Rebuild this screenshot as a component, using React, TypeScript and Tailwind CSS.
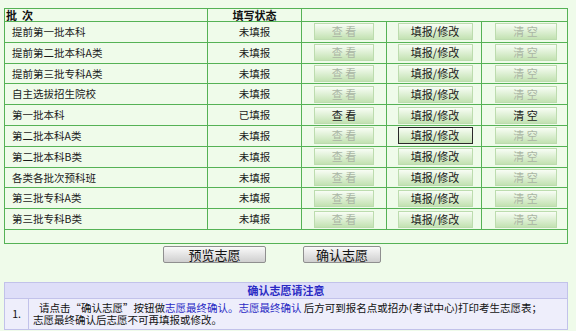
const rows = [
  { name: "提前第一批本科", status: "未填报", view: false, clear: false },
  { name: "提前第二批本科A类", status: "未填报", view: false, clear: false },
  { name: "提前第三批专科A类", status: "未填报", view: false, clear: false },
  { name: "自主选拔招生院校", status: "未填报", view: false, clear: false },
  { name: "第一批本科", status: "已填报", view: true, clear: true },
  { name: "第二批本科A类", status: "未填报", view: false, clear: false, focus: true },
  { name: "第二批本科B类", status: "未填报", view: false, clear: false },
  { name: "各类各批次预科班", status: "未填报", view: false, clear: false },
  { name: "第三批专科A类", status: "未填报", view: false, clear: false },
  { name: "第三批专科B类", status: "未填报", view: false, clear: false },
];

const GreenButton = ({
  label,
  enabled,
  focus,
  width,
}: {
  label: string;
  enabled: boolean;
  focus?: boolean;
  width: string;
}) => (
  <button
    className={`${width} h-[17px] flex items-center justify-center text-[11px] leading-none bg-gradient-to-b from-[#f8fdf5] to-[#c3e2b2] border ${
      focus ? "border-[#2a2a2a]" : "border-[#bcdcae]"
    } ${enabled ? "text-[#1a1a1a]" : "text-[#aab5a4]"}`}
  >
    {label}
  </button>
);

const App = () => {
  return (
    <div
      className="w-[576px] h-[331px] bg-[#effbea] pt-[8px] pl-[4px] overflow-hidden"
      style={{ fontFamily: '"Noto Sans CJK SC", "Liberation Sans", sans-serif' }}
    >
      <div className="w-[564px] border border-[#55b255] bg-[#effbea]">
        <div className="flex h-[13px] border-b border-[#55b255] text-[11px] leading-[12px] font-bold text-[#111]">
          <div className="w-[203px] border-r border-[#55b255] pl-[1px]">批&nbsp;&nbsp;次</div>
          <div className="w-[94px] border-r border-[#55b255] text-center">填写状态</div>
          <div className="flex-1" />
        </div>
        {rows.map((r) => (
          <div
            key={r.name}
            className="flex h-[20.8px] border-b border-[#55b255] text-[10.5px] text-[#1a1a1a]"
          >
            <div className="w-[203px] border-r border-[#55b255] pl-[7px] flex items-center">
              {r.name}
            </div>
            <div className="w-[94px] border-r border-[#55b255] flex items-center justify-center">
              {r.status}
            </div>
            <div className="w-[85px] border-r border-[#55b255] flex items-center justify-center">
              <GreenButton label="查 看" enabled={r.view} width="w-[60px]" />
            </div>
            <div className="w-[95px] border-r border-[#55b255] flex items-center justify-center pl-[2px]">
              <GreenButton label="填报/修改" enabled={true} focus={r.focus} width="w-[75px]" />
            </div>
            <div className="flex-1 flex items-center justify-center pl-[2px]">
              <GreenButton label="清 空" enabled={r.clear} width="w-[62px]" />
            </div>
          </div>
        ))}
        <div className="h-[13px]" />
      </div>

      <div className="flex mt-[2px] pl-[159px] gap-[37px]">
        <button className="w-[103px] h-[17px] rounded-[2px] border border-[#8f8f8f] bg-gradient-to-b from-[#fafafa] to-[#cfcfcf] text-[13px] leading-none text-[#111]">
          预览志愿
        </button>
        <button className="w-[78px] h-[17px] rounded-[2px] border border-[#8f8f8f] bg-gradient-to-b from-[#fafafa] to-[#cfcfcf] text-[13px] leading-none text-[#111]">
          确认志愿
        </button>
      </div>

      <div className="mt-[19px] w-[564px] border border-[#c2c2ea] text-[10.5px]">
        <div className="h-[16px] bg-[#dedef8] border-b border-[#c2c2ea] flex items-center justify-center font-bold text-[#2a2ac4] text-[11px]">
          确认志愿请注意
        </div>
        <div className="flex h-[30px] bg-[#eeeefb]">
          <div className="w-[24px] border-r border-[#c2c2ea] flex items-center justify-center text-[#111]">
            1.
          </div>
          <div className="flex-1 pl-[4px] pt-[3px] text-[#111] flex flex-col">
            <div className="h-[12px] leading-[12px] pl-[6px] whitespace-nowrap">
              请点击“确认志愿”按钮做
              <span className="text-[#2a2ac4]">志愿最终确认。志愿最终确认</span>
              &nbsp;后方可到报名点或招办(考试中心)打印考生志愿表；
            </div>
            <div className="h-[12px] leading-[12px] whitespace-nowrap">
              志愿最终确认后志愿不可再填报或修改。
            </div>
          </div>
        </div>
      </div>
    </div>
  );
};

export default App;
